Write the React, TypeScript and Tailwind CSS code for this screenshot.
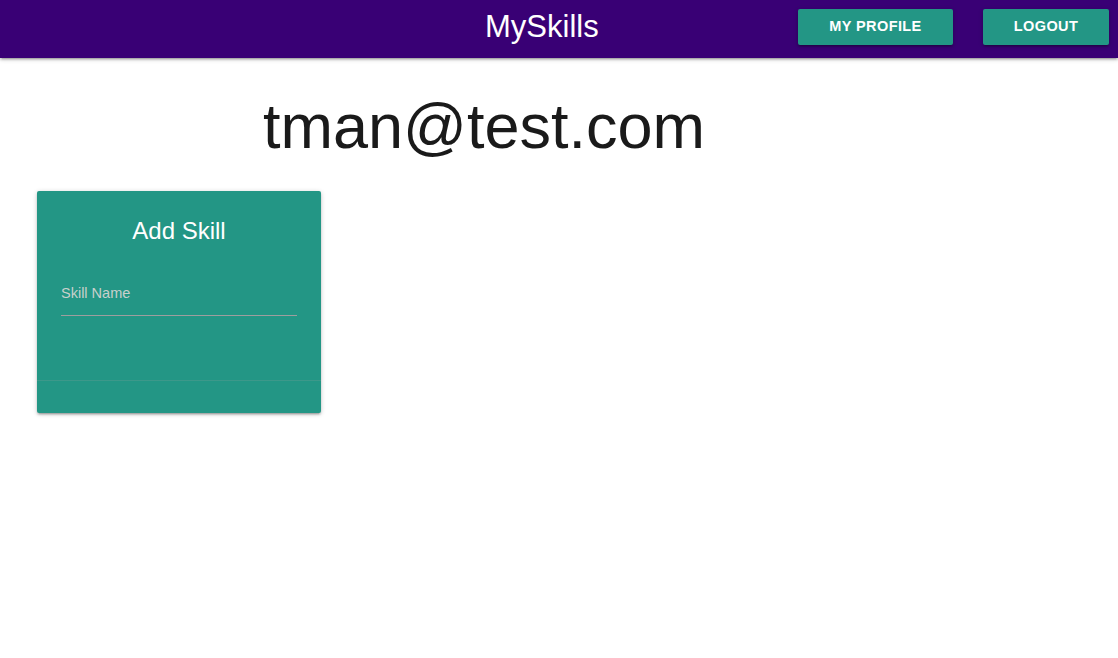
import React from "react";

export default function App() {
  return (
    <div className="min-h-[658px] w-full bg-white" style={{ fontFamily: '"Liberation Sans", Arial, sans-serif' }}>
      <nav className="relative z-10 flex h-[58px] items-start bg-[#390075] shadow-[0_2px_2px_0_rgba(0,0,0,0.14),0_3px_1px_-2px_rgba(0,0,0,0.12),0_1px_5px_0_rgba(0,0,0,0.2)]">
        <div className="mt-[11px] pl-[485px] text-[31px] leading-[32px] text-white">MySkills</div>
        <div className="ml-auto mt-[9px] flex gap-[30px] pr-[9px]">
          <button className="h-[36px] w-[155px] rounded-[2px] bg-[#239685] text-[14.5px] font-bold tracking-[0.4px] text-white shadow-[0_2px_2px_0_rgba(0,0,0,0.14),0_3px_1px_-2px_rgba(0,0,0,0.12),0_1px_5px_0_rgba(0,0,0,0.2)]">
            MY PROFILE
          </button>
          <button className="h-[36px] w-[126px] rounded-[2px] bg-[#239685] text-[14.5px] font-bold tracking-[0.4px] text-white shadow-[0_2px_2px_0_rgba(0,0,0,0.14),0_3px_1px_-2px_rgba(0,0,0,0.12),0_1px_5px_0_rgba(0,0,0,0.2)]">
            LOGOUT
          </button>
        </div>
      </nav>
      <h1 className="mt-[37px] pl-[263px] text-[63px] leading-none text-[#1a1a1a]">tman@test.com</h1>
      <div className="ml-[37px] mt-[33px] w-[284px] rounded-[2px] bg-[#239685] shadow-[0_2px_2px_0_rgba(0,0,0,0.14),0_3px_1px_-2px_rgba(0,0,0,0.12),0_1px_5px_0_rgba(0,0,0,0.2)]">
        <div className="h-[189px] px-[24px] pt-[24px]">
          <div className="text-center text-[24px] leading-[32px] text-white">Add Skill</div>
          <div className="mt-[37px] border-b border-[#9e9e9e] pb-[13px] text-[14.5px] leading-[18px] text-[#c8d0cc]">
            Skill Name
          </div>
        </div>
        <div className="h-[33px] border-t border-[rgba(160,160,160,0.2)]"></div>
      </div>
    </div>
  );
}
